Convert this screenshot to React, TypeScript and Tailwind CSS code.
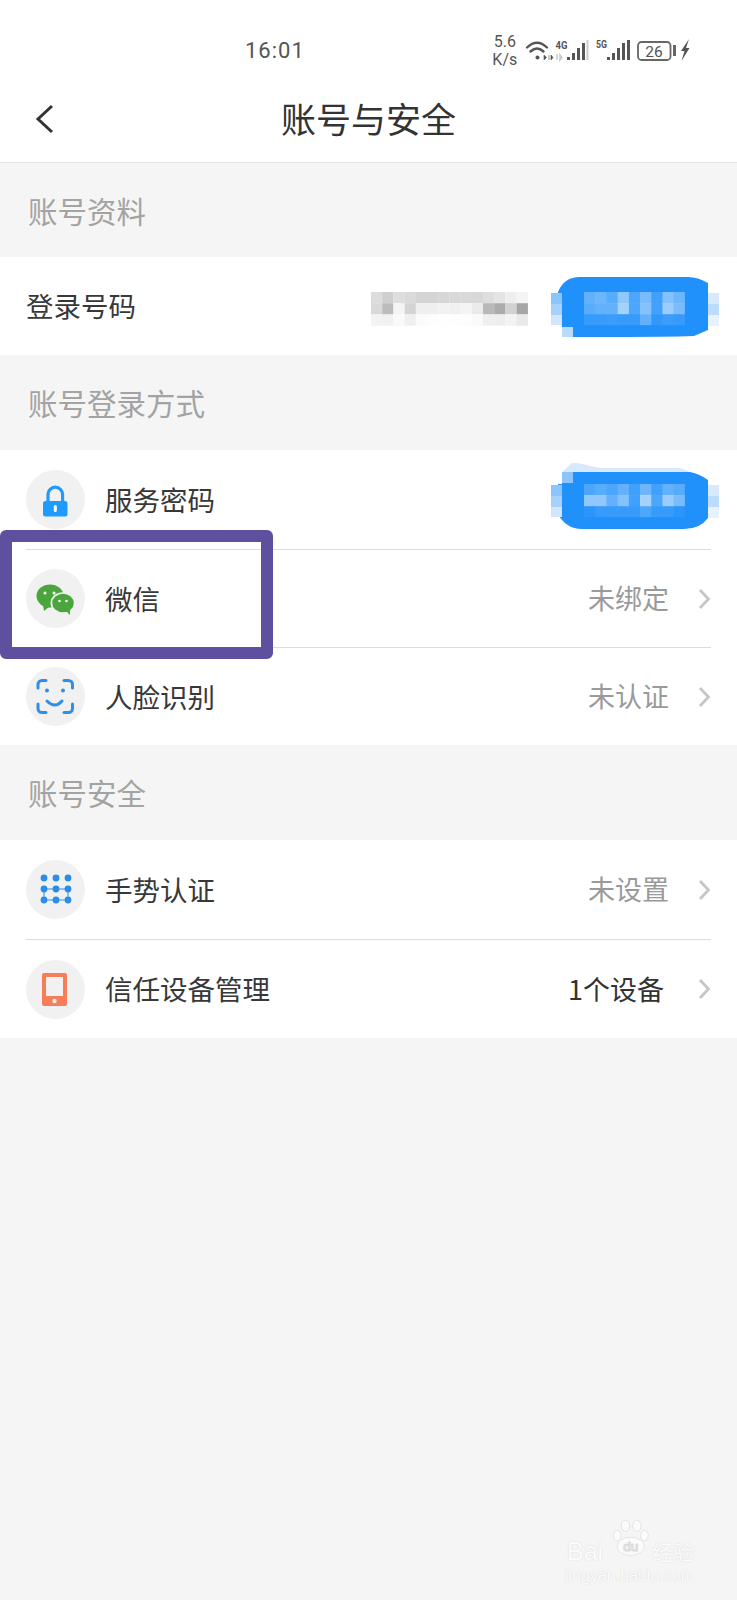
import React from 'react';

const FONT = "font-['Noto_Sans_CJK_SC','Noto_Sans',sans-serif]";

const grayRows = [
  ['#dcdcdc', '#cfcfcf', '#dedede', '#dadada', '#d4d4d4', '#d4d4d4', '#d6d6d6', '#d8d8d8', '#d8d8d8', '#d8d8d8', '#dedede', '#e4e4e4', '#eeeeee', '#f4f4f4'],
  ['#d9d9d9', '#bcbcbc', '#f4f4f4', '#d4d4d4', '#efefef', '#efefef', '#f2f2f2', '#f0f0f0', '#f4f4f4', '#ebebeb', '#b9b9b9', '#acacac', '#d2d2d2', '#a6a6a6'],
  ['#f3f3f3', '#f1f1f1', '#fafafa', '#efefef', '#fbfbfb', '#fdfdfd', '#fefefe', '#fdfdfd', '#fdfdfd', '#fafafa', '#efefef', '#eeeeee', '#f3f3f3', '#e9e9e9'],
];

const blueRows1 = [
  [0.3, 0.35, 0.25, 0.5, 0.2, 0.4, 0.15, 0.45, 0.35],
  [0.25, 0.3, 0.3, 0.6, 0.2, 0.45, 0.15, 0.55, 0.4],
  [0.1, 0.1, 0.12, 0.1, 0.1, 0.3, 0.08, 0.12, 0.1],
];

const blueRows2 = [
  [0.2, 0.25, 0.2, 0.3, 0.15, 0.35, 0.15, 0.3, 0.25],
  [0.5, 0.5, 0.3, 0.45, 0.15, 0.6, 0.2, 0.55, 0.4],
  [0.05, 0.1, 0.1, 0.1, 0.1, 0.2, 0.1, 0.1, 0.05],
];

function StatusIcons() {
  return (
    <svg width="175" height="28" viewBox="520 36 175 28" className="shrink-0">
      <g fill="none" stroke="#555" strokeWidth="2.4" strokeLinecap="round">
        <path d="M527 47.5 Q537 38 547 47.5" />
        <path d="M530.5 51.5 Q537 45.5 543.5 51.5" />
      </g>
      <circle cx="537.5" cy="57.5" r="2" fill="#555" />
      <path d="M544 55l2.5 2.5-2.5 2.5zM549 55v5M551 55l2 2.5-2 2.5z" fill="#555" stroke="#555" strokeWidth="0.6" />
      <text x="555.5" y="48.5" fontSize="10" fontWeight="700" fill="#555" fontFamily="Roboto, sans-serif" textLength="12" lengthAdjust="spacingAndGlyphs">4G</text>
      <path d="M557 54v6M560 55l2 2.5-2 2.5z" stroke="#ccc" strokeWidth="1.6" fill="#ccc" />
      {[[567, 57], [572, 53], [577, 48], [582, 43]].map(([x, y]) => (
        <rect key={x} x={x} y={y} width="3" height={60 - y} fill="#555" />
      ))}
      <rect x="586.5" y="40" width="2" height="20" fill="#ccc" />
      <text x="596" y="48" fontSize="10" fontWeight="700" fill="#555" fontFamily="Roboto, sans-serif" textLength="11" lengthAdjust="spacingAndGlyphs">5G</text>
      {[[607, 57], [612, 53], [617, 48], [622, 43], [627, 40]].map(([x, y]) => (
        <rect key={x} x={x} y={y} width="3" height={60 - y} fill="#555" />
      ))}
      <rect x="638" y="42" width="32.5" height="18" rx="3.5" fill="none" stroke="#666" strokeWidth="1.8" />
      <text x="654" y="57" fontSize="15.5" fill="#555" textAnchor="middle" fontFamily="Roboto, sans-serif">26</text>
      <rect x="673" y="45" width="3" height="11" fill="#666" />
      <path d="M689 39l-8 12h3.5l-3 10 8-13h-3.5z" fill="#555" />
    </svg>
  );
}

function LockIcon() {
  return (
    <svg width="59" height="59" viewBox="0 0 59 59" className="absolute inset-0">
      <path d="M22 32v-7.5a7.3 7.3 0 0 1 14.6 0V32" fill="none" stroke="#1e9bff" strokeWidth="3.2" />
      <rect x="17" y="31" width="24.5" height="15.5" rx="2.5" fill="#1e9bff" />
      <rect x="27.8" y="35" width="3" height="7" rx="1.5" fill="#fff" />
    </svg>
  );
}

function WechatIcon() {
  return (
    <svg width="59" height="59" viewBox="0 0 59 59" className="absolute inset-0">
      <ellipse cx="24" cy="27" rx="13.5" ry="11.5" fill="#4aa63c" />
      <path d="M17 36l1 6 5-4z" fill="#4aa63c" />
      <ellipse cx="37" cy="34" rx="12.5" ry="10.8" fill="#f1f1f1" />
      <ellipse cx="37" cy="34" rx="10.8" ry="9.3" fill="#4aa63c" />
      <path d="M40 42l4 4 0-6z" fill="#4aa63c" />
      <circle cx="19" cy="24" r="1.5" fill="#fff" />
      <circle cx="28" cy="24" r="1.5" fill="#fff" />
      <circle cx="33.5" cy="32" r="1.3" fill="#fff" />
      <circle cx="40.5" cy="32" r="1.3" fill="#fff" />
    </svg>
  );
}

function FaceIcon() {
  return (
    <svg width="59" height="59" viewBox="0 0 59 59" className="absolute inset-0">
      <g fill="none" stroke="#2f8fe8" strokeWidth="3" strokeLinecap="round">
        <path d="M12 21v-3.5a4 4 0 0 1 4-4h4" />
        <path d="M38 13.5h4.5a4 4 0 0 1 4 4V21" />
        <path d="M12 37v4.5a4 4 0 0 0 4 4h4" />
        <path d="M38 45.5h4.5a4 4 0 0 0 4-4V37" />
        <path d="M21 34q8 8 15 0" />
      </g>
      <circle cx="21" cy="23.5" r="2" fill="#2f8fe8" />
      <circle cx="37" cy="23.5" r="2" fill="#2f8fe8" />
    </svg>
  );
}

function GridIcon() {
  const xs = [18, 30, 42];
  const ys = [18, 29, 40];
  return (
    <svg width="59" height="59" viewBox="0 0 59 59" className="absolute inset-0">
      <path d="M18 29H42M18 40H42M18 29V40M42 29V40" stroke="#2a8de8" strokeWidth="1" fill="none" />
      {ys.map(y => xs.map(x => <circle key={`${x}-${y}`} cx={x} cy={y} r="3.4" fill="#2a8de8" />))}
    </svg>
  );
}

function PhoneIcon() {
  return (
    <svg width="59" height="59" viewBox="0 0 59 59" className="absolute inset-0">
      <rect x="16" y="13" width="25" height="33" rx="2" fill="#f77d59" />
      <rect x="20" y="17" width="17" height="19" fill="#f1f1f1" />
      <circle cx="28.5" cy="41" r="2.2" fill="#f1f1f1" />
    </svg>
  );
}

function Chevron() {
  return (
    <svg width="14" height="22" viewBox="0 0 14 22" className="shrink-0">
      <path d="M3 2l8.5 9-8.5 9" fill="none" stroke="#c6c6c6" strokeWidth="2.8" />
    </svg>
  );
}

function PhoneMosaic() {
  return (
    <svg width="180" height="50" viewBox="360 281 180 50" className="shrink-0">
      {grayRows.map((row, r) => row.map((c, i) => (
        <rect key={`${r}-${i}`} x={371 + i * 11.2} y={292 + r * 11.2} width="11.3" height="11.3" fill={c} />
      )))}
    </svg>
  );
}

function BlueBlob({ rows, top }: { rows: number[][]; top: boolean }) {
  const body = top
    ? 'M558 292Q564 277 580 277H688Q698 277 708 283V330L694 336Q670 337 573 337V327H562L558 300Z'
    : 'M562 280H690Q700 282 708 288V326Q700 337 684 337H582Q566 337 558 322V292H562Z';
  return (
    <svg width="180" height="70" viewBox="545 271 180 70" className="shrink-0">
      {!top && <path d="M573 270L600 276H680L690 280H562Z" fill="#d6e9fd" />}
      <path d={body} fill="#2090fb" />
      {top && <rect x="562" y="327" width="11" height="10" fill="#b8dafc" />}
      {!top && <rect x="562" y="280" width="11" height="11" fill="#8cc5fb" />}
      <rect x="551" y="293" width="11" height="11" fill="#8cc5fb" />
      <rect x="551" y="304" width="11" height="11" fill="#a5d2fc" />
      <rect x="551" y="315" width="11" height="10" fill="#cfe6fd" />
      <rect x="708" y="293" width="11" height="11" fill="#d6e9fd" />
      <rect x="708" y="304" width="11" height="11" fill="#bcdcfc" />
      <rect x="708" y="315" width="11" height="11" fill="#e6f2fe" />
      {rows.map((row, r) => row.map((o, i) => (
        <rect key={`${r}-${i}`} x={584 + i * 11.2} y={292 + r * 11} width="11.3" height="11.2" fill="#fff" opacity={o} />
      )))}
    </svg>
  );
}

function Section({ title, h = 'h-[95px]' }: { title: string; h?: string }) {
  return (
    <div className={`${h} flex items-center pl-[28px] text-[29.5px] text-[#a3a3a3]`}>{title}</div>
  );
}

function Circle({ icon }: { icon: React.ReactNode }) {
  return <div className="relative w-[59px] h-[59px] rounded-full bg-[#f1f1f1] shrink-0">{icon}</div>;
}

function Row({ icon, label, value, dark, divider, h }: { icon: React.ReactNode; label: string; value: string; dark?: boolean; divider?: boolean; h: string }) {
  return (
    <div className={`${h} mx-[26px] flex items-center ${divider ? 'border-b border-[#dcdcdc]' : ''}`}>
      <Circle icon={icon} />
      <span className="ml-[20px] text-[27.5px] text-[#383838]">{label}</span>
      <span className={`ml-auto text-[27px] ${dark ? 'text-[#333] mr-[33px]' : 'text-[#9a9a9a] mr-[28px]'}`}>{value}</span>
      <Chevron />
    </div>
  );
}

export default function App() {
  return (
    <div className={`relative w-[737px] h-[1600px] bg-[#f5f5f5] overflow-hidden ${FONT}`}>
      <div className="bg-white h-[163px] border-b border-[#e6e6e6]">
        <div className="h-[88px] flex items-start">
          <span className="ml-[245px] mt-[36px] text-[22px] leading-[30px] tracking-[1px] text-[#555] font-['Roboto',sans-serif]">16:01</span>
          <div className="ml-[187px] mt-[33px] w-[26px] text-[16px] leading-[18px] text-[#555] text-center font-['Roboto',sans-serif] whitespace-nowrap">
            5.6<br />K/s
          </div>
          <div className="mt-[36px] ml-[2px]"><StatusIcons /></div>
        </div>
        <div className="h-[60px] flex items-center relative">
          <svg width="20" height="32" viewBox="0 0 20 32" className="ml-[35px] shrink-0 mt-[1px]">
            <path d="M17 3L3 16l14 13" fill="none" stroke="#333" strokeWidth="3" />
          </svg>
          <span className="absolute inset-x-0 text-center text-[35px] text-[#333]">账号与安全</span>
        </div>
      </div>

      <Section title="账号资料" h="h-[94px]" />
      <div className="bg-white h-[98px] pl-[26px] flex items-center overflow-hidden">
        <span className="text-[27.5px] text-[#383838]">登录号码</span>
        <div className="ml-[224px]"><PhoneMosaic /></div>
        <div className="ml-[5px]"><BlueBlob rows={blueRows1} top /></div>
      </div>

      <Section title="账号登录方式" />
      <div className="bg-white h-[295px]">
        <div className="relative">
          <Row icon={<LockIcon />} label="服务密码" value="" divider h="h-[100px]" />
          <div className="absolute right-[12px] top-[13px]"><BlueBlob rows={blueRows2} top={false} /></div>
        </div>
        <Row icon={<WechatIcon />} label="微信" value="未绑定" divider h="h-[98px]" />
        <Row icon={<FaceIcon />} label="人脸识别" value="未认证" h="h-[97px]" />
      </div>

      <Section title="账号安全" />
      <div className="bg-white h-[198px]">
        <Row icon={<GridIcon />} label="手势认证" value="未设置" divider h="h-[100px]" />
        <Row icon={<PhoneIcon />} label="信任设备管理" value="1个设备" dark h="h-[98px]" />
      </div>

      {/* highlight box drawn over the rows */}
      <div className="absolute left-0 top-[530px] w-[273px] h-[129px] border-[12px] border-[#5f4f9f] rounded-[6px]" />

      {/* baidu watermark */}
      <div className="absolute left-[565px] top-[1518px] w-[150px] h-[74px] text-[#fbfbfb] [text-shadow:0_0_1.5px_#d4d4d4]">
        <span className="absolute left-[2px] top-[18px] text-[25px] leading-[30px] font-['Liberation_Sans',sans-serif]">Bai</span>
        <svg width="38" height="38" viewBox="0 0 50 50" className="absolute left-[46px] top-[1px]">
          <g fill="#fbfbfb" stroke="#dddddd" strokeWidth="1">
            <ellipse cx="8" cy="22" rx="5" ry="7" />
            <ellipse cx="19" cy="9" rx="5.5" ry="7.5" />
            <ellipse cx="34" cy="9" rx="5.5" ry="7.5" />
            <ellipse cx="44" cy="22" rx="5" ry="7" />
            <ellipse cx="26" cy="36" rx="18" ry="12" />
          </g>
          <text x="26" y="42" fontSize="18" textAnchor="middle" fill="#f0f0f0" stroke="#d0d0d0" strokeWidth="0.5" fontFamily="Liberation Sans, sans-serif">du</text>
        </svg>
        <span className="absolute left-[87px] top-[18px] text-[21px] leading-[30px]">经验</span>
        <span className="absolute left-0 top-[48px] text-[16px] leading-[20px] font-['Liberation_Sans',sans-serif] whitespace-nowrap">jingyan.baidu.com</span>
      </div>
    </div>
  );
}
